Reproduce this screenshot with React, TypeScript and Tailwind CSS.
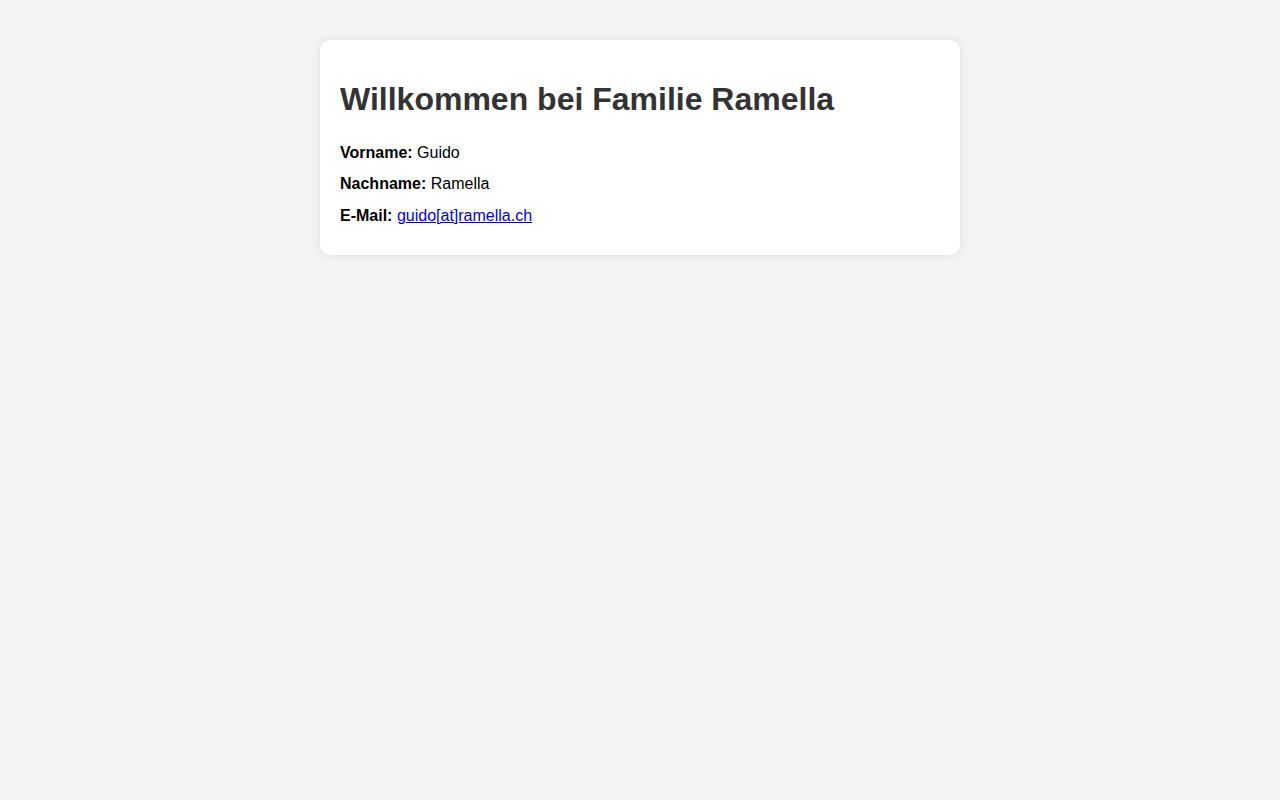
export default function App() {
  return (
    <div className="min-h-screen bg-[#f4f4f4] pt-10 font-['Liberation_Sans',Arial,sans-serif] text-black">
      <div className="mx-auto w-[640px] rounded-[10px] bg-white p-5 shadow-[0_0_10px_rgba(0,0,0,0.1)]">
        <h1 className="my-[21.44px] text-[32px] font-bold leading-[normal] text-[#333]">
          Willkommen bei Familie Ramella
        </h1>
        <p className="my-[6px] text-[16px] leading-[1.6]">
          <strong>Vorname:</strong> Guido
        </p>
        <p className="my-[6px] text-[16px] leading-[1.6]">
          <strong>Nachname:</strong> Ramella
        </p>
        <p className="my-[6px] text-[16px] leading-[1.6]">
          <strong>E-Mail:</strong>{" "}
          <a href="#" className="text-[#0000ee] underline">
            guido[at]ramella.ch
          </a>
        </p>
      </div>
    </div>
  );
}
